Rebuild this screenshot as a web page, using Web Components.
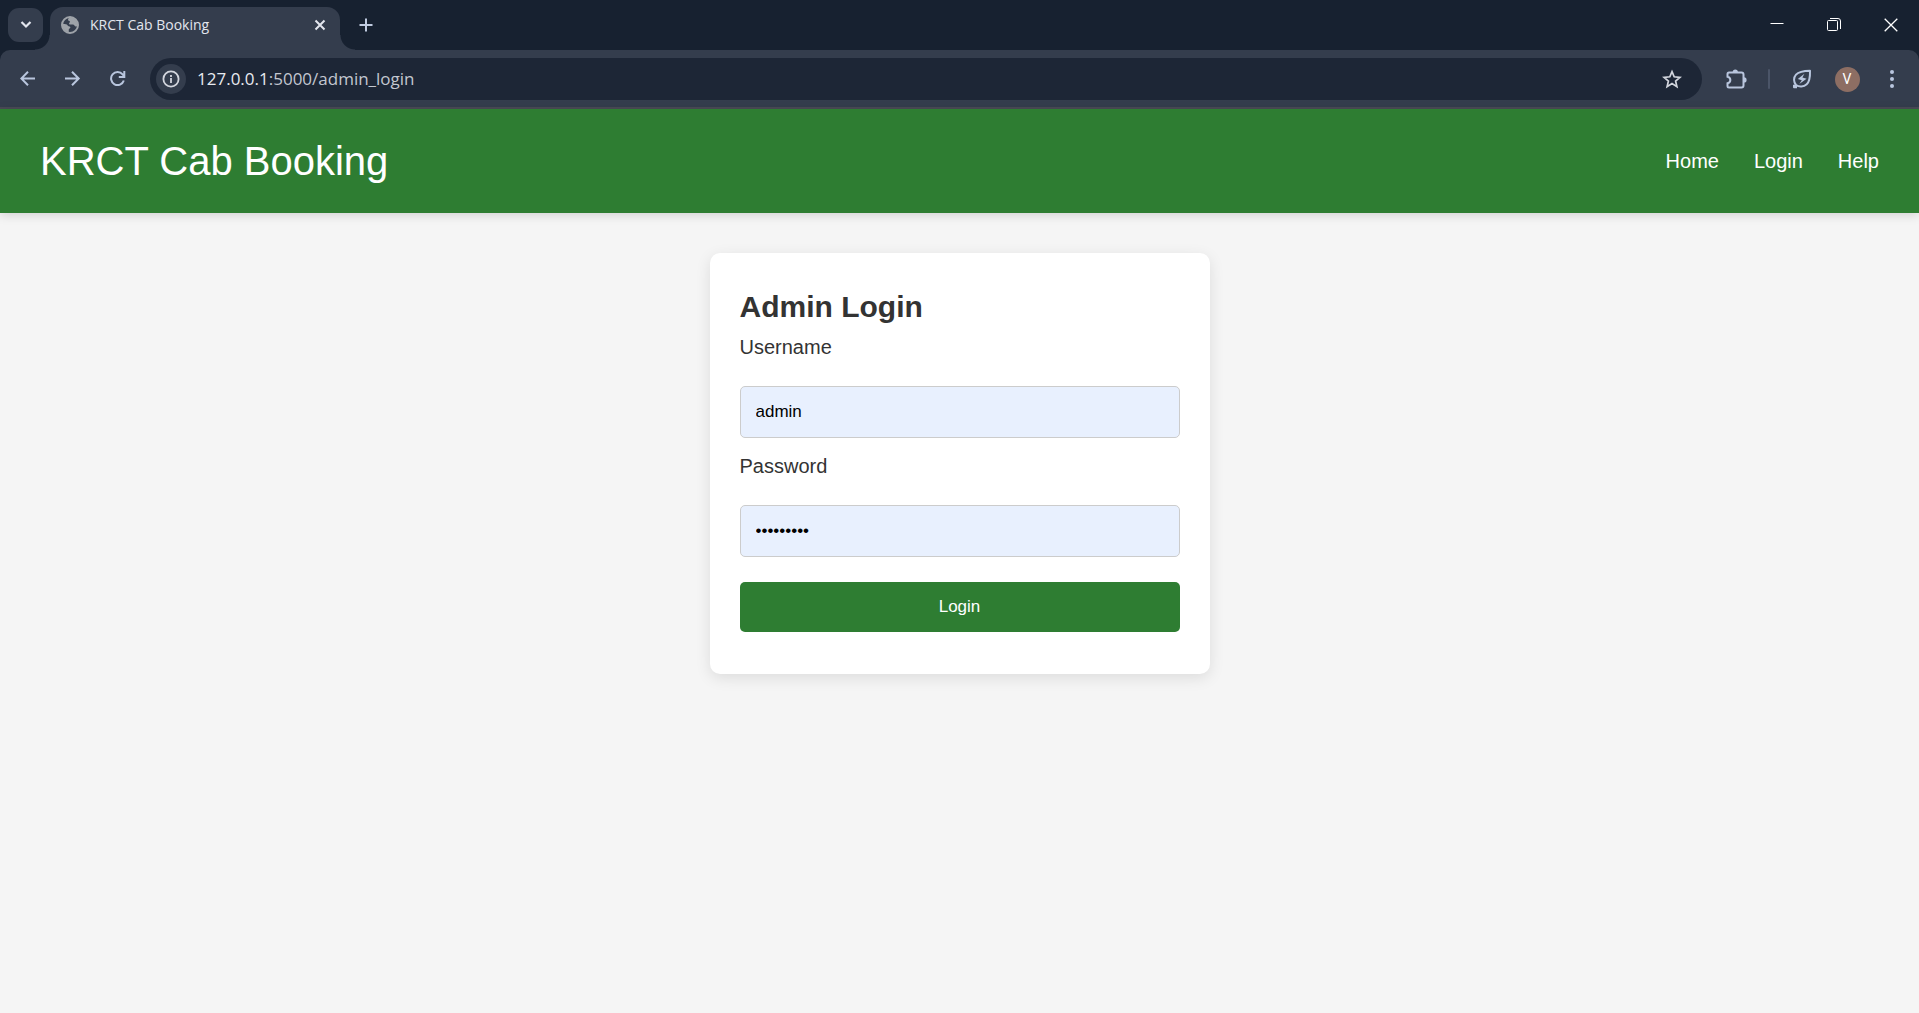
<!DOCTYPE html>
<html lang="en">
<head>
<meta charset="utf-8">
<title>KRCT Cab Booking</title>
<style>
  html, body { margin: 0; }
  body { min-height: 100vh; display: flex; flex-direction: column; background: #f5f5f5; color: #333; font-family: Arial, "Liberation Sans", sans-serif; font-size: 20px; line-height: 32px; }
  main { padding: 40px 20px; }
</style>
</head>
<body>
<browser-chrome>
  <browser-tabs slot="tabs" label="KRCT Cab Booking"></browser-tabs>
  <browser-toolbar slot="toolbar" host="127.0.0.1" path=":5000/admin_login" initial="V"></browser-toolbar>
</browser-chrome>
<site-header>
  KRCT Cab Booking
  <nav-link slot="nav" href="#home">Home</nav-link>
  <nav-link slot="nav" href="#login">Login</nav-link>
  <nav-link slot="nav" href="#help">Help</nav-link>
</site-header>
<main>
  <login-card>
    <span slot="title">Admin Login</span>
    <form-field label="Username" type="text" value="admin"></form-field>
    <form-field label="Password" type="password" value="admin1234"></form-field>
    <submit-button>Login</submit-button>
  </login-card>
</main>

<script>
const define = (name, render) => customElements.define(name, class extends HTMLElement {
  constructor() {
    super();
    this.attachShadow({ mode: 'open' });
  }
  connectedCallback() {
    this.shadowRoot.innerHTML = render(this);
  }
});

const reset = `
  *, *::before, *::after { box-sizing: border-box; }
  button { border: 0; padding: 0; margin: 0; background: none; color: inherit; font: inherit; display: flex; align-items: center; justify-content: center; flex: none; }
  svg { display: block; flex: none; fill: none; stroke: currentColor; stroke-width: 2; }
`;

define('browser-chrome', () => `
  <style>
    :host { display: block; background: #172130; border-bottom: 2px solid #4a4a56; font-family: "Open Sans", "Noto Sans", sans-serif; }
  </style>
  <slot name="tabs"></slot>
  <slot name="toolbar"></slot>`);

define('browser-tabs', el => `
  <style>${reset}
    :host { display: flex; align-items: stretch; height: 50px; padding-left: 8px; color: #e3e6ee; }
    .search { width: 35px; height: 34px; margin: 8px 7px 0 0; border-radius: 11px; background: #343d4d; }
    .tab { position: relative; display: flex; align-items: center; gap: 11px; width: 290px; margin-top: 7px; padding: 0 12px 7px 11px; border-radius: 13px 13px 0 0; background: #343d4d; font-size: 14px; line-height: 20px; }
    .tab::before, .tab::after { content: ""; position: absolute; bottom: 0; width: 15px; height: 15px; }
    .tab::before { right: 100%; background: radial-gradient(circle at 0 0, transparent 14px, #343d4d 15px); }
    .tab::after { left: 100%; background: radial-gradient(circle at 100% 0, transparent 14px, #343d4d 15px); }
    .name { flex: 1; white-space: nowrap; }
    .close { width: 16px; height: 16px; }
    .new { width: 28px; height: 50px; margin-left: 12px; color: #c0cbe0; }
    .window { display: flex; margin-left: auto; color: #fff; }
    .window button { width: 57px; }
    .window svg { stroke-width: 1; }
  </style>
  <button class="search" aria-label="Search tabs"><svg width="12" height="8" viewBox="0 0 12 8"><path d="M1.500 1 6 5.500 10.500 1" stroke-width="2.200"/></svg></button>
  <div class="tab">
    <svg width="18" height="18" viewBox="0 0 18 18" style="color:#9ea3a9"><circle cx="9" cy="9" r="8"/><path fill="currentColor" stroke="none" d="M9 1.200c-.8.700-2 1.400-2 2.500 0 1.300 1.700.8 1.900 1.900.2 1-1.100 1.200-.8 2.300.3.900 2.500.5 3.800.6 1.500.1 1.300 1.600 2.700 1.900.8.100 1.500-.1 2-.3A8 8 0 0 0 9 1.200ZM1.300 7.300c.6.900 2 .8 3.500.9 1.900.1 1.700 1.700 2.800 2 .9.200 1.900.3 1.800 1.400-.1.900-1.300.9-1.600 1.800-.2.800.3 1.900-.4 3.100A8 8 0 0 1 1.300 7.300Z"/></svg>
    <span class="name">${el.getAttribute('label')}</span>
    <button class="close" aria-label="Close tab"><svg width="12" height="12" viewBox="0 0 12 12"><path d="m1.500 1.500 9 9m0-9-9 9"/></svg></button>
  </div>
  <button class="new" aria-label="New tab"><svg width="14" height="14" viewBox="0 0 14 14"><path d="M7 .5v13M.5 7h13"/></svg></button>
  <div class="window">
    <button aria-label="Minimize"><svg width="14" height="14" viewBox="0 0 14 14"><path d="M.5 5.500h13"/></svg></button>
    <button aria-label="Restore"><svg width="14" height="14" viewBox="0 0 14 14"><rect x=".5" y="2.500" width="10" height="10" rx="1"/><path d="M3 .5H11a2.500 2.500 0 0 1 2.500 2.500v8"/></svg></button>
    <button aria-label="Close"><svg width="14" height="14" viewBox="0 0 14 14" style="stroke-width:1.300"><path d="m.7.700 12.600 12.600m0-12.600L.7 13.300"/></svg></button>
  </div>`);

define('browser-toolbar', el => `
  <style>${reset}
    :host { display: flex; align-items: center; gap: 9px; padding: 8px 9px 7px 10px; border-radius: 10px 10px 0 0; background: #343d4d; color: #b9c6de; }
    button { width: 36px; height: 36px; }
    .address { flex: 1; display: flex; align-items: center; gap: 11px; height: 42px; margin: 0 7px 0 5px; padding: 0 12px 0 6px; border-radius: 21px; background: #1d2636; color: #d3d6de; font-size: 17px; line-height: 24px; }
    .address .info { width: 30px; height: 30px; border-radius: 50%; background: #343d4d; }
    .url { flex: 1; color: #c3c7d0; white-space: nowrap; }
    .url b { font-weight: 400; color: #e8eaf0; }
    .rule { width: 2px; height: 20px; margin: 0 5px; border-radius: 1px; background: #4b5568; }
    .avatar { width: 25px; height: 25px; border-radius: 50%; background: #8d6e63; color: #fff; font: 14px/25px Roboto, sans-serif; text-align: center; }
  </style>
  <button aria-label="Back"><svg width="16" height="16" viewBox="0 0 16 16"><path d="M15 7.500H1.800M8 .8 1.300 7.500 8 14.200"/></svg></button>
  <button aria-label="Forward"><svg width="16" height="16" viewBox="0 0 16 16"><path d="M0 7.500h13.200M7 .8l6.700 6.700L7 14.200"/></svg></button>
  <button aria-label="Reload"><svg width="16" height="16" viewBox="0 0 16 16"><path d="M13.800 9.500A6.500 6.500 0 1 1 12.600 3.400L14 5M14.300 0v6H8.800"/></svg></button>
  <div class="address">
    <button class="info" aria-label="Site information"><svg width="18" height="18" viewBox="0 0 18 18"><circle cx="9" cy="9" r="7.600" stroke-width="1.800"/><path stroke-width="1.800" d="M9 8v5M9 5v2"/></svg></button>
    <span class="url"><b>${el.getAttribute('host')}</b>${el.getAttribute('path')}</span>
    <button aria-label="Bookmark"><svg width="20" height="20" viewBox="0 0 20 20" style="stroke-width:1.700"><path d="m10 2.600 2.200 5.200 5.700.5-4.300 3.700 1.300 5.600-4.900-3-4.900 3L6.400 12 2.100 8.300l5.700-.5L10 2.600Z"/></svg></button>
  </div>
  <button aria-label="Extensions"><svg width="22" height="22" viewBox="0 0 22 22"><path d="M4 4.500h12.500a2 2 0 0 1 2 2v11a2 2 0 0 1-2 2H4a1.500 1.500 0 0 1-1.500-1.500v-2.800c3.800-.8 3.800-5.600 0-6.400V6A1.500 1.500 0 0 1 4 4.500Z"/><path fill="currentColor" stroke="none" d="M7.700 4a2.600 2.600 0 0 1 5.200 0ZM19 9.300a2.600 2.600 0 0 1 0 5.200Z"/></svg></button>
  <span class="rule"></span>
  <button aria-label="Energy saver"><svg width="20" height="20" viewBox="0 0 20 20"><path d="M1.500 18.500 4 16C1.500 13 1.300 8.500 4 5.600 7 2.300 11.500 1.800 18 1.700c.2 6.300-.2 10.600-3.300 13.600-3 2.800-7.500 3-10.700.7M2 15.800v2.400h3" stroke-linejoin="round"/><path fill="currentColor" stroke="none" d="M12.400 4.800 5.800 10l4 1.200-2.500 3.900 7.300-5.400-4.200-1.200 2-3.700Z"/></svg></button>
  <button aria-label="Profile"><span class="avatar">${el.getAttribute('initial')}</span></button>
  <button aria-label="Menu"><svg width="4" height="20" viewBox="0 0 4 20" style="fill:currentColor;stroke:none"><circle cx="2" cy="3" r="2"/><circle cx="2" cy="10" r="2"/><circle cx="2" cy="17" r="2"/></svg></button>`);

define('site-header', () => `
  <style>
    :host { display: flex; align-items: center; justify-content: space-between; padding: 20px 40px; background: #2e7d32; color: #fff; box-shadow: 0 2px 10px rgba(0, 0, 0, .15); }
    h1 { margin: 0; font-size: 40px; font-weight: 400; line-height: 64px; }
    nav { display: flex; gap: 35px; }
  </style>
  <h1><slot></slot></h1>
  <nav><slot name="nav"></slot></nav>`);

define('nav-link', el => `
  <style>
    :host { display: block; }
    a { color: #fff; text-decoration: none; }
  </style>
  <a href="${el.getAttribute('href')}"><slot></slot></a>`);

define('login-card', () => `
  <style>
    :host { display: block; box-sizing: border-box; max-width: 500px; margin: 0 auto; padding: 30px 30px 42px; border-radius: 10px; background: #fff; box-shadow: 0 4px 15px rgba(0, 0, 0, .1); }
    h2 { margin: 0; font-size: 30px; line-height: 48px; }
    form { display: flex; flex-direction: column; gap: 12px; }
  </style>
  <h2><slot name="title"></slot></h2>
  <form onsubmit="return false"><slot></slot></form>`);

define('form-field', el => `
  <style>
    :host { display: flex; flex-direction: column; gap: 23px; }
    input { box-sizing: border-box; width: 100%; height: 52px; margin: 0; padding: 0 15px; border: 1px solid #ccc; border-radius: 5px; background: #e8f0fe; color: #000; font: 17px Arial, "Liberation Sans", sans-serif; }
  </style>
  <label for="control">${el.getAttribute('label')}</label>
  <input id="control" type="${el.getAttribute('type')}" value="${el.getAttribute('value')}">`);

define('submit-button', () => `
  <style>
    :host { display: block; padding-top: 13px; }
    button { display: block; width: 100%; height: 50px; padding: 0; border: 0; border-radius: 5px; background: #2e7d32; color: #fff; font: 17px Arial, "Liberation Sans", sans-serif; }
  </style>
  <button type="submit"><slot></slot></button>`);
</script>
</body>
</html>
